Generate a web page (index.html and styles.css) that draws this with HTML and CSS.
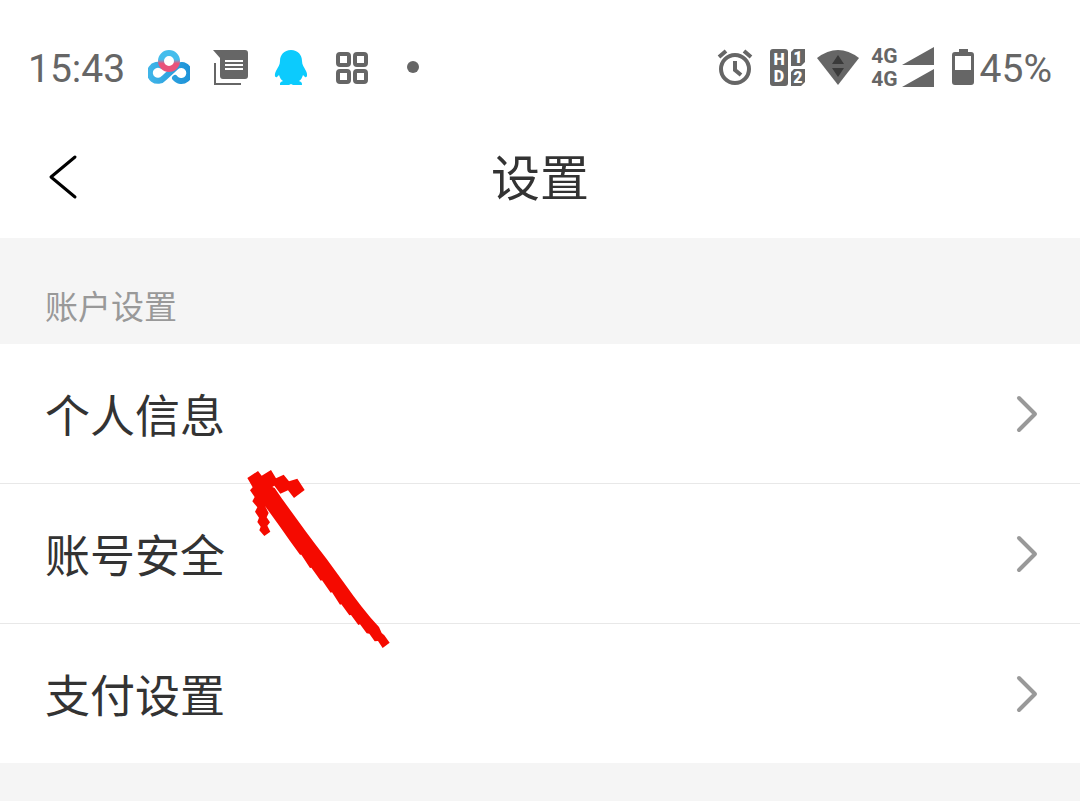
FILE: index.html
```html
<!DOCTYPE html>
<html lang="zh-CN">
<head>
  <meta charset="UTF-8" />
  <meta name="viewport" content="width=device-width, initial-scale=1" />
  <title>设置</title>
  <link rel="stylesheet" href="styles.css">
</head>
<body>

  <div class="status-bar">
    <div class="status-left">
      <span class="time">15:43</span>
      <svg class="status-icon" viewBox="0 0 42 42" fill="none">
        <defs>
          <linearGradient id="cloud" x1="0" x2="1">
            <stop offset="0" stop-color="#3fb4e8" />
            <stop offset="1" stop-color="#1e93d8" />
          </linearGradient>
          <linearGradient id="ring" x1="0" x2="0" y1="0" y2="1">
            <stop offset="0.4" stop-color="#45bdec" />
            <stop offset="0.65" stop-color="#e9527a" />
          </linearGradient>
        </defs>
        <path d="M27 31A8 8 0 1 0 28 20M28 20L16 31A8 8 0 1 1 14 19" stroke="url(#cloud)" stroke-width="6" stroke-linecap="round" />
        <circle cx="21" cy="14" r="8" stroke="url(#ring)" stroke-width="6" />
      </svg>
      <svg class="status-icon" viewBox="0 0 42 42">
        <path d="M4 3H36Q39 3 39 6V29Q39 32 36 32H14Q11 32 11 29V11Z" fill="#666" />
        <path d="M16 14H34M16 18H34M16 22H34" stroke="#fff" stroke-width="2" />
        <path d="M6 16V37H32" fill="none" stroke="#666" stroke-width="2" />
      </svg>
      <svg class="status-icon" viewBox="0 0 42 42">
        <path d="M21 3C14 3 10 8 10 14C10 18 8 20 6 24C4 28 5 31 7 30L9 28C10 31 11 33 13 34C10 35 10 36 10 38H19L21 37L23 38H32C32 36 32 35 29 34C31 33 32 31 33 28L35 30C37 31 38 28 36 24C34 20 32 18 32 14C32 8 28 3 21 3Z" fill="#0ccbfd" />
      </svg>
      <svg class="status-icon" viewBox="0 0 42 42" fill="none" stroke="#666" stroke-width="4">
        <rect x="7" y="7" width="11" height="11" rx="2" />
        <rect x="24" y="7" width="11" height="11" rx="2" />
        <rect x="7" y="24" width="11" height="11" rx="2" />
        <rect x="24" y="24" width="11" height="11" rx="2" />
      </svg>
      <svg class="status-icon" viewBox="0 0 42 42">
        <circle cx="21" cy="20" r="6" fill="#666" />
      </svg>
    </div>

    <div class="status-right">
      <svg class="alarm-icon" viewBox="0 0 40 40" fill="none" stroke="#666" stroke-width="4">
        <circle cx="18" cy="21" r="14" />
        <path d="M18 13V22L24 27" />
        <path d="M2 9L9 3M27 3L34 9" />
      </svg>
      <svg class="sim-icon" viewBox="0 0 36 40">
        <rect x="1" y="1" width="18" height="37" rx="3" fill="#666" />
        <path d="M25 1H36V14L32 18H22V4ZM25 21H36V34L32 38H22V24Z" fill="#666" />
        <text class="sim-text" x="10" y="17">H</text>
        <text class="sim-text" x="10" y="34">D</text>
        <text class="sim-text" x="29" y="15">1</text>
        <text class="sim-text" x="29" y="35">2</text>
      </svg>
      <svg class="wifi-icon" viewBox="0 0 42 40">
        <path d="M0 10Q21 -6 42 10L21 37Z" fill="#666" />
        <path d="M15 16L21 7L27 16ZM15 20H27L21 29Z" fill="#3a3a3a" />
      </svg>
      <div class="network">
        <div class="network-names">
          <span>4G</span>
          <span>4G</span>
        </div>
        <svg class="signal-icon" viewBox="0 0 32 42">
          <path d="M0 18L32 0V18ZM0 40L32 22V40Z" fill="#666" />
        </svg>
      </div>
      <div class="battery">
        <svg class="battery-icon" viewBox="0 0 22 40">
          <path d="M7 1H16V4H19Q22 4 22 7V34Q22 37 19 37H3Q0 37 0 34V7Q0 4 3 4H7Z" fill="#666" />
          <rect x="3" y="8" width="16" height="14" fill="#fff" />
        </svg>
        <span class="level">45%</span>
      </div>
    </div>
  </div>

  <header class="nav-bar">
    <button class="back" type="button" aria-label="返回">
      <svg class="back-icon" viewBox="0 0 30 46">
        <path d="M27 3L3 23L27 43" />
      </svg>
    </button>
    <h1>设置</h1>
  </header>

  <main>
    <h2>账户设置</h2>
    <nav class="list">
      <a class="row" href="#profile">
        <span>个人信息</span>
        <svg class="chevron" viewBox="0 0 22 38"><path d="M3 3L19 19L3 35" /></svg>
      </a>
      <a class="row" href="#security">
        <span>账号安全</span>
        <svg class="chevron" viewBox="0 0 22 38"><path d="M3 3L19 19L3 35" /></svg>
      </a>
      <a class="row" href="#payment">
        <span>支付设置</span>
        <svg class="chevron" viewBox="0 0 22 38"><path d="M3 3L19 19L3 35" /></svg>
      </a>
      <!-- hand drawn arrow pointing at the first row -->
      <svg class="arrow" viewBox="0 0 540 630">
        <path d="M52 69L84 48L95 62L123 45L138 70L161 59L177 79L202 71L224 105L192 129L174 106L151 116L133 92L127 96L134 99L155 130L228 230L256 268L290 312L343 385L370 422L394 454L422 488L447 516L455 534L463 541L479 563L458 579L444 558L434 559L418 536L410 535L390 508L385 510L363 480L358 481L334 448L330 449L306 412L302 413L276 376L272 377L244 338L240 339L214 299L210 299L180 258L150 215L105 153L116 174L110 187L120 202L112 212L121 230L103 243L88 226L92 215L82 201L87 188L75 170L82 157L67 139L74 126L60 106L68 97Z" />
      </svg>
    </nav>
  </main>

</body>
</html>
```
FILE: styles.css
```css
body {
  margin: 0;
  background: #f5f5f5;
  color: #333;
  font-family: Roboto, "Noto Sans CJK SC", sans-serif;
}

svg {
  display: block;
  flex: none;
}

.status-bar {
  display: flex;
  justify-content: space-between;
  align-items: center;
  height: 116px;
  padding: 20px 28px 0;
  box-sizing: border-box;
  background: #fff;
  color: #666;
  font-size: 39px;
  line-height: 44px;
}

.status-left {
  display: flex;
  align-items: center;
  gap: 19px;
}

.status-right {
  display: flex;
  align-items: center;
  gap: 12px;
}

.time,
.level {
  padding-top: 2px;
}

.time {
  min-width: 101px;
}

.status-icon {
  width: 42px;
  height: 42px;
}

.alarm-icon {
  width: 40px;
  height: 40px;
}

.sim-icon {
  width: 36px;
  height: 40px;
}

.sim-text {
  fill: #fff;
  font-size: 16px;
  font-weight: 900;
  text-anchor: middle;
}

.wifi-icon {
  width: 42px;
  height: 40px;
}

.network {
  display: flex;
  align-items: center;
  gap: 4px;
}

.network-names {
  display: flex;
  flex-direction: column;
  font-size: 21px;
  font-weight: 700;
  line-height: 23px;
}

.signal-icon {
  width: 32px;
  height: 42px;
}

.battery {
  display: flex;
  align-items: center;
  gap: 6px;
  padding-left: 6px;
}

.battery-icon {
  width: 22px;
  height: 40px;
}

.nav-bar {
  display: grid;
  grid-template-columns: 1fr auto 1fr;
  align-items: center;
  height: 122px;
  padding: 0 47px;
  background: #fff;
}

.back {
  justify-self: start;
  padding: 0;
  border: none;
  background: none;
  cursor: pointer;
}

.back-icon {
  width: 32px;
  height: 46px;
  fill: none;
  stroke: #000;
  stroke-width: 3;
  stroke-linecap: round;
  stroke-linejoin: round;
}

h1 {
  margin: 0;
  padding-top: 6px;
  font-size: 49px;
  font-weight: 400;
  line-height: 60px;
}

h2 {
  margin: 0;
  padding: 46px 45px 12px;
  color: #999;
  font-size: 33px;
  font-weight: 400;
  line-height: 48px;
}

.list {
  position: relative;
  background: #fff;
}

.row {
  display: flex;
  justify-content: space-between;
  align-items: center;
  height: 139px;
  padding: 0 42px 0 45px;
  border-bottom: 1px solid #e8e8e8;
  color: #333;
  font-size: 45px;
  text-decoration: none;
}

.row:last-of-type {
  border-bottom: none;
}

.chevron {
  width: 22px;
  height: 38px;
  fill: none;
  stroke: #999;
  stroke-width: 4;
  stroke-linecap: round;
  stroke-linejoin: round;
}

.arrow {
  position: absolute;
  top: 111px;
  left: 230px;
  width: 180px;
  height: 210px;
  fill: #f50a00;
  pointer-events: none;
}
```
